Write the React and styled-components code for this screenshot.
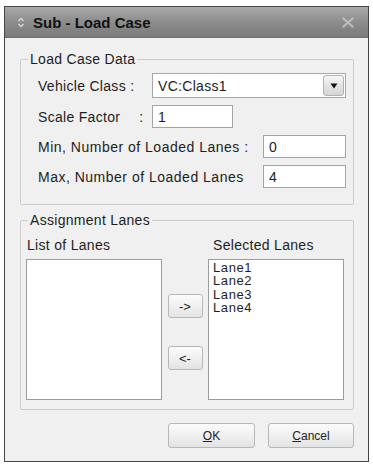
import React from "react";
import styled, { createGlobalStyle } from "styled-components";

const Global = createGlobalStyle`
  html, body { margin: 0; padding: 0; background: #ffffff; }
  body { font-family: "Liberation Sans", Arial, sans-serif; color: #1e1e1e; }
`;

const Dialog = styled.div`
  margin: 6px 0 0 4px;
  width: 365px;
  box-sizing: border-box;
  border: 1px solid #454545;
  background: #f0f0f0;
`;

const TitleBar = styled.div`
  height: 31px;
  display: flex;
  align-items: center;
  padding: 0 14px 0 12px;
  background: linear-gradient(#aaaaaa 0%, #949494 35%, #858585 70%, #7b7b7b 100%);
  border-bottom: 1px solid #6e6e6e;
  box-sizing: border-box;
`;

const TitleText = styled.span`
  margin-left: 8px;
  font-size: 15px;
  font-weight: bold;
  color: #111;
  flex: 1;
`;

const Body = styled.div`
  padding: 13px 14px 13px 15px;
  display: flex;
  flex-direction: column;
`;

const Group = styled.fieldset`
  margin: 0 0 ${(p) => p.$mb || 0}px 0;
  padding: 0;
  border: 1px solid #cdcdcd;
  border-radius: 2px;
  min-width: 0;
`;

const Legend = styled.legend`
  margin-left: 7px;
  padding: 0 2px;
  font-size: 14px;
  line-height: 16px;
  letter-spacing: 0.3px;
  color: #1e1e1e;
`;

const GroupBody = styled.div`
  padding: ${(p) => p.$pad};
  display: flex;
  flex-direction: column;
  gap: 7px;
`;

const Row = styled.div`
  display: flex;
  align-items: center;
  height: ${(p) => p.$h || 23}px;
`;

const Label = styled.span`
  width: ${(p) => p.$w}px;
  flex: none;
  font-size: 14px;
  letter-spacing: ${(p) => p.$ls || 0.3}px;
  white-space: pre;
  color: #1e1e1e;
`;

const Colon = styled.span`
  margin-left: ${(p) => p.$gap}px;
`;

const Select = styled.div`
  width: ${(p) => p.$w}px;
  height: 100%;
  box-sizing: border-box;
  border: 1px solid #a7a7a7;
  background: #fff;
  display: flex;
  align-items: center;
  padding: 1px 1px 1px 5px;
  font-size: 14px;
  letter-spacing: 0.3px;
`;

const SelectValue = styled.span`
  flex: 1;
`;

const DropButton = styled.div`
  width: 21px;
  height: 100%;
  box-sizing: border-box;
  border: 1px solid #b2b2b2;
  border-radius: 3px;
  background: linear-gradient(#f7f7f7, #e4e4e4 50%, #d6d6d6);
  display: flex;
  align-items: center;
  justify-content: center;
`;

const TextInput = styled.div`
  width: ${(p) => p.$w}px;
  height: 100%;
  box-sizing: border-box;
  border: 1px solid #a4a4a4;
  background: #fff;
  padding: 0 5px;
  display: flex;
  align-items: center;
  font-size: 14px;
`;

const LanesGrid = styled.div`
  display: grid;
  grid-template-columns: 136px 1fr 136px;
  row-gap: 6px;
  padding: 9px 9px 9px 5px;
`;

const ColLabel = styled.span`
  padding-left: ${(p) => p.$pl}px;
  font-size: 14px;
  line-height: 16px;
  letter-spacing: 0.3px;
`;

const ListBox = styled.div`
  height: 141px;
  box-sizing: border-box;
  border: 1px solid #9c9c9c;
  background: #fff;
  padding: 1px 4px;
`;

const ListItem = styled.div`
  height: 13.3px;
  font-size: 13px;
  line-height: 13.3px;
  letter-spacing: 0.6px;
  overflow: visible;
`;

const MoveColumn = styled.div`
  display: flex;
  flex-direction: column;
  align-items: center;
  padding-top: 35px;
  gap: 28px;
`;

const Button = styled.div`
  width: ${(p) => p.$w}px;
  height: ${(p) => p.$h}px;
  box-sizing: border-box;
  border: 1px solid #b7b7b7;
  border-radius: 3px;
  background: linear-gradient(#fbfbfb, #f0f0f0 50%, #e3e3e3);
  display: flex;
  align-items: center;
  justify-content: center;
  font-size: ${(p) => p.$fs || 12}px;
  color: #222;
`;

const Footer = styled.div`
  display: flex;
  justify-content: flex-end;
  gap: 13px;
  margin-top: 13px;
`;

const SortIcon = () => (
  <svg width="8" height="11" viewBox="0 0 8 11">
    <path d="M1.5 4 L4 1.5 L6.5 4" fill="none" stroke="#d6d6d6" strokeWidth="1.4" />
    <path d="M1.5 7 L4 9.5 L6.5 7" fill="none" stroke="#d6d6d6" strokeWidth="1.4" />
  </svg>
);

const CloseIcon = () => (
  <svg width="12" height="11" viewBox="0 0 12 11">
    <path d="M1.5 1.5 L10.5 9.5 M10.5 1.5 L1.5 9.5" stroke="#bdbdbd" strokeWidth="2.2" strokeLinecap="round" />
  </svg>
);

const DownTriangle = () => (
  <svg width="8" height="6" viewBox="0 0 8 6">
    <path d="M0.5 0.5 L7.5 0.5 L4 5.5 Z" fill="#111" />
  </svg>
);

const lanes = ["Lane1", "Lane2", "Lane3", "Lane4"];

export default function App() {
  return (
    <>
      <Global />
      <Dialog>
        <TitleBar>
          <SortIcon />
          <TitleText>Sub - Load Case</TitleText>
          <CloseIcon />
        </TitleBar>
        <Body>
          <Group $mb={7}>
            <Legend>Load Case Data</Legend>
            <GroupBody $pad="6px 7px 16px 17px">
              <Row $h={25}>
                <Label $w={114} $ls={0}>Vehicle Class :</Label>
                <Select $w={194}>
                  <SelectValue>VC:Class1</SelectValue>
                  <DropButton>
                    <DownTriangle />
                  </DropButton>
                </Select>
              </Row>
              <Row>
                <Label $w={114}>
                  Scale Factor<Colon $gap={19}>:</Colon>
                </Label>
                <TextInput $w={81}>1</TextInput>
              </Row>
              <Row>
                <Label $w={225} $ls={0.5}>Min, Number of Loaded Lanes :</Label>
                <TextInput $w={83}>0</TextInput>
              </Row>
              <Row>
                <Label $w={225} $ls={0.5}>Max, Number of Loaded Lanes</Label>
                <TextInput $w={83}>4</TextInput>
              </Row>
            </GroupBody>
          </Group>
          <Group>
            <Legend>Assignment Lanes</Legend>
            <LanesGrid>
              <ColLabel $pl={1}>List of Lanes</ColLabel>
              <span />
              <ColLabel $pl={5}>Selected Lanes</ColLabel>
              <ListBox />
              <MoveColumn>
                <Button $w={35} $h={24} $fs={13}>-&gt;</Button>
                <Button $w={35} $h={24} $fs={13}>&lt;-</Button>
              </MoveColumn>
              <ListBox>
                {lanes.map((l) => (
                  <ListItem key={l}>{l}</ListItem>
                ))}
              </ListBox>
            </LanesGrid>
          </Group>
          <Footer>
            <Button $w={87} $h={25}>
              <span><u>O</u>K</span>
            </Button>
            <Button $w={86} $h={25}>
              <span><u>C</u>ancel</span>
            </Button>
          </Footer>
        </Body>
      </Dialog>
    </>
  );
}
